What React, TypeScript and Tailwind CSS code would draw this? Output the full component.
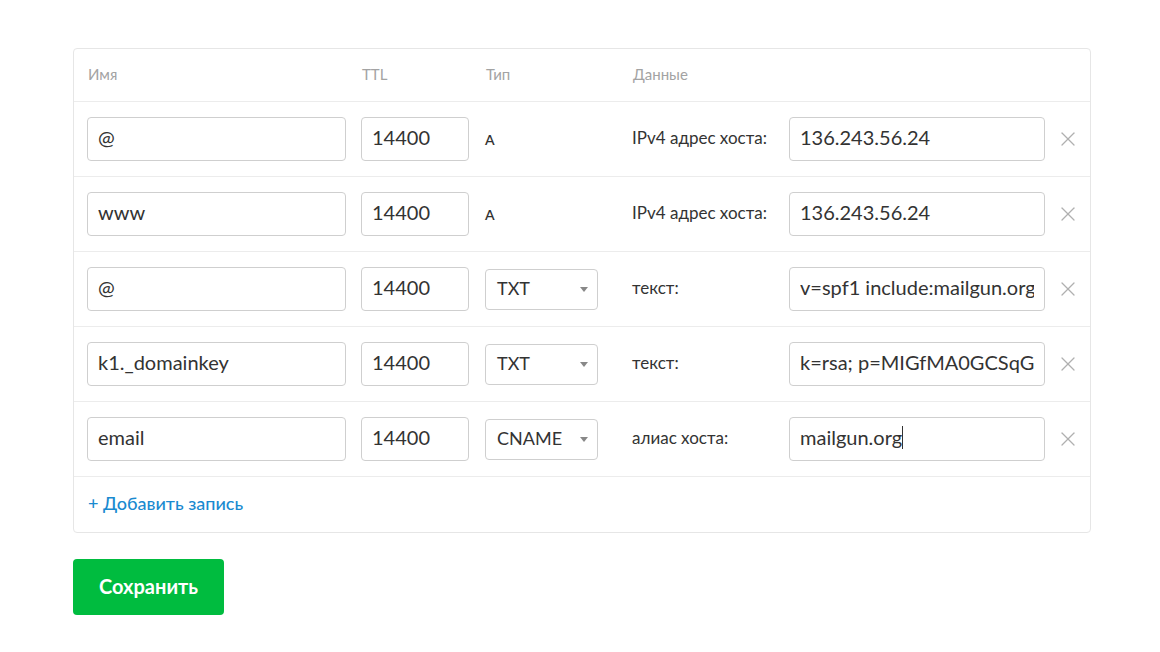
import { X } from 'lucide-react'

type Rec = {
  name: string
  type: string
  select: boolean
  label: string
  value: string
  focused?: boolean
}

const RECORDS: Rec[] = [
  { name: '@', type: 'A', select: false, label: 'IPv4 адрес хоста:', value: '136.243.56.24' },
  { name: 'www', type: 'A', select: false, label: 'IPv4 адрес хоста:', value: '136.243.56.24' },
  { name: '@', type: 'TXT', select: true, label: 'текст:', value: 'v=spf1 include:mailgun.org ~all' },
  { name: 'k1._domainkey', type: 'TXT', select: true, label: 'текст:', value: 'k=rsa; p=MIGfMA0GCSqGSIb3DQEBAQUAA4GNADCBiQKBgQ' },
  { name: 'email', type: 'CNAME', select: true, label: 'алиас хоста:', value: 'mailgun.org', focused: true },
]

const field =
  'h-[44px] shrink-0 rounded-[4px] border border-[#cfcfcf] bg-white px-[10px] pb-[4px] text-[20px] text-[#333] outline-none'

function Row({ r }: { r: Rec }) {
  return (
    <div className="flex h-[75px] items-center border-b border-[#ececec] pl-[13px]">
      <input readOnly defaultValue={r.name} className={`${field} w-[259px]`} />
      <input readOnly defaultValue="14400" className={`${field} ml-[15px] w-[108px]`} />
      <div className="ml-[16px] w-[147px] shrink-0">
        {r.select ? (
          <div className="flex h-[41px] w-[113px] items-center justify-between rounded-[4px] border border-[#cfcfcf] bg-white pb-[2px] pl-[11px] pr-[9px] text-[18px] text-[#333]">
            <span>{r.type}</span>
            <span className="mt-[3px] h-0 w-0 border-x-[4px] border-t-[5px] border-x-transparent border-t-[#888]" />
          </div>
        ) : (
          <span className="text-[14px] font-semibold text-[#333]">{r.type}</span>
        )}
      </div>
      <div className="w-[157px] shrink-0 pb-[2px] text-[17px] text-[#333]">{r.label}</div>
      {r.focused ? (
        <div className={`${field} flex w-[256px] items-center border-[#8a8a8a]`}>
          <span>{r.value}</span>
          <span className="h-[23px] w-px bg-[#333]" />
        </div>
      ) : (
        <input readOnly defaultValue={r.value} className={`${field} w-[256px]`} />
      )}
      <button className="ml-[11px] grid h-[24px] w-[24px] shrink-0 place-items-center pb-[4px] text-[#b0b0b0]" aria-label="Удалить">
        <X size={24} strokeWidth={1.3} />
      </button>
    </div>
  )
}

export default function App() {
  return (
    <div className="min-h-screen bg-white pl-[73px] pt-[48px] font-['Lato','Liberation_Sans',sans-serif]">
      <div className="w-[1018px] rounded-[4px] border border-[#e6e6e6]">
        <div className="flex h-[53px] items-center border-b border-[#ececec] pb-[2px] pl-[14px] text-[15px] text-[#a3a3a3]">
          <span className="w-[274px] shrink-0">Имя</span>
          <span className="w-[124px] shrink-0">TTL</span>
          <span className="w-[147px] shrink-0">Тип</span>
          <span>Данные</span>
        </div>
        {RECORDS.map((r, i) => (
          <Row key={i} r={r} />
        ))}
        <div className="flex h-[55px] items-center pb-[2px] pl-[14px]">
          <a href="#" className="text-[18px] font-medium text-[#1a8ad0]">
            + Добавить запись
          </a>
        </div>
      </div>
      <button className="mt-[26px] h-[56px] w-[151px] rounded-[4px] bg-[#00bc3f] pb-[2px] text-[20px] font-bold text-white">
        Сохранить
      </button>
    </div>
  )
}
